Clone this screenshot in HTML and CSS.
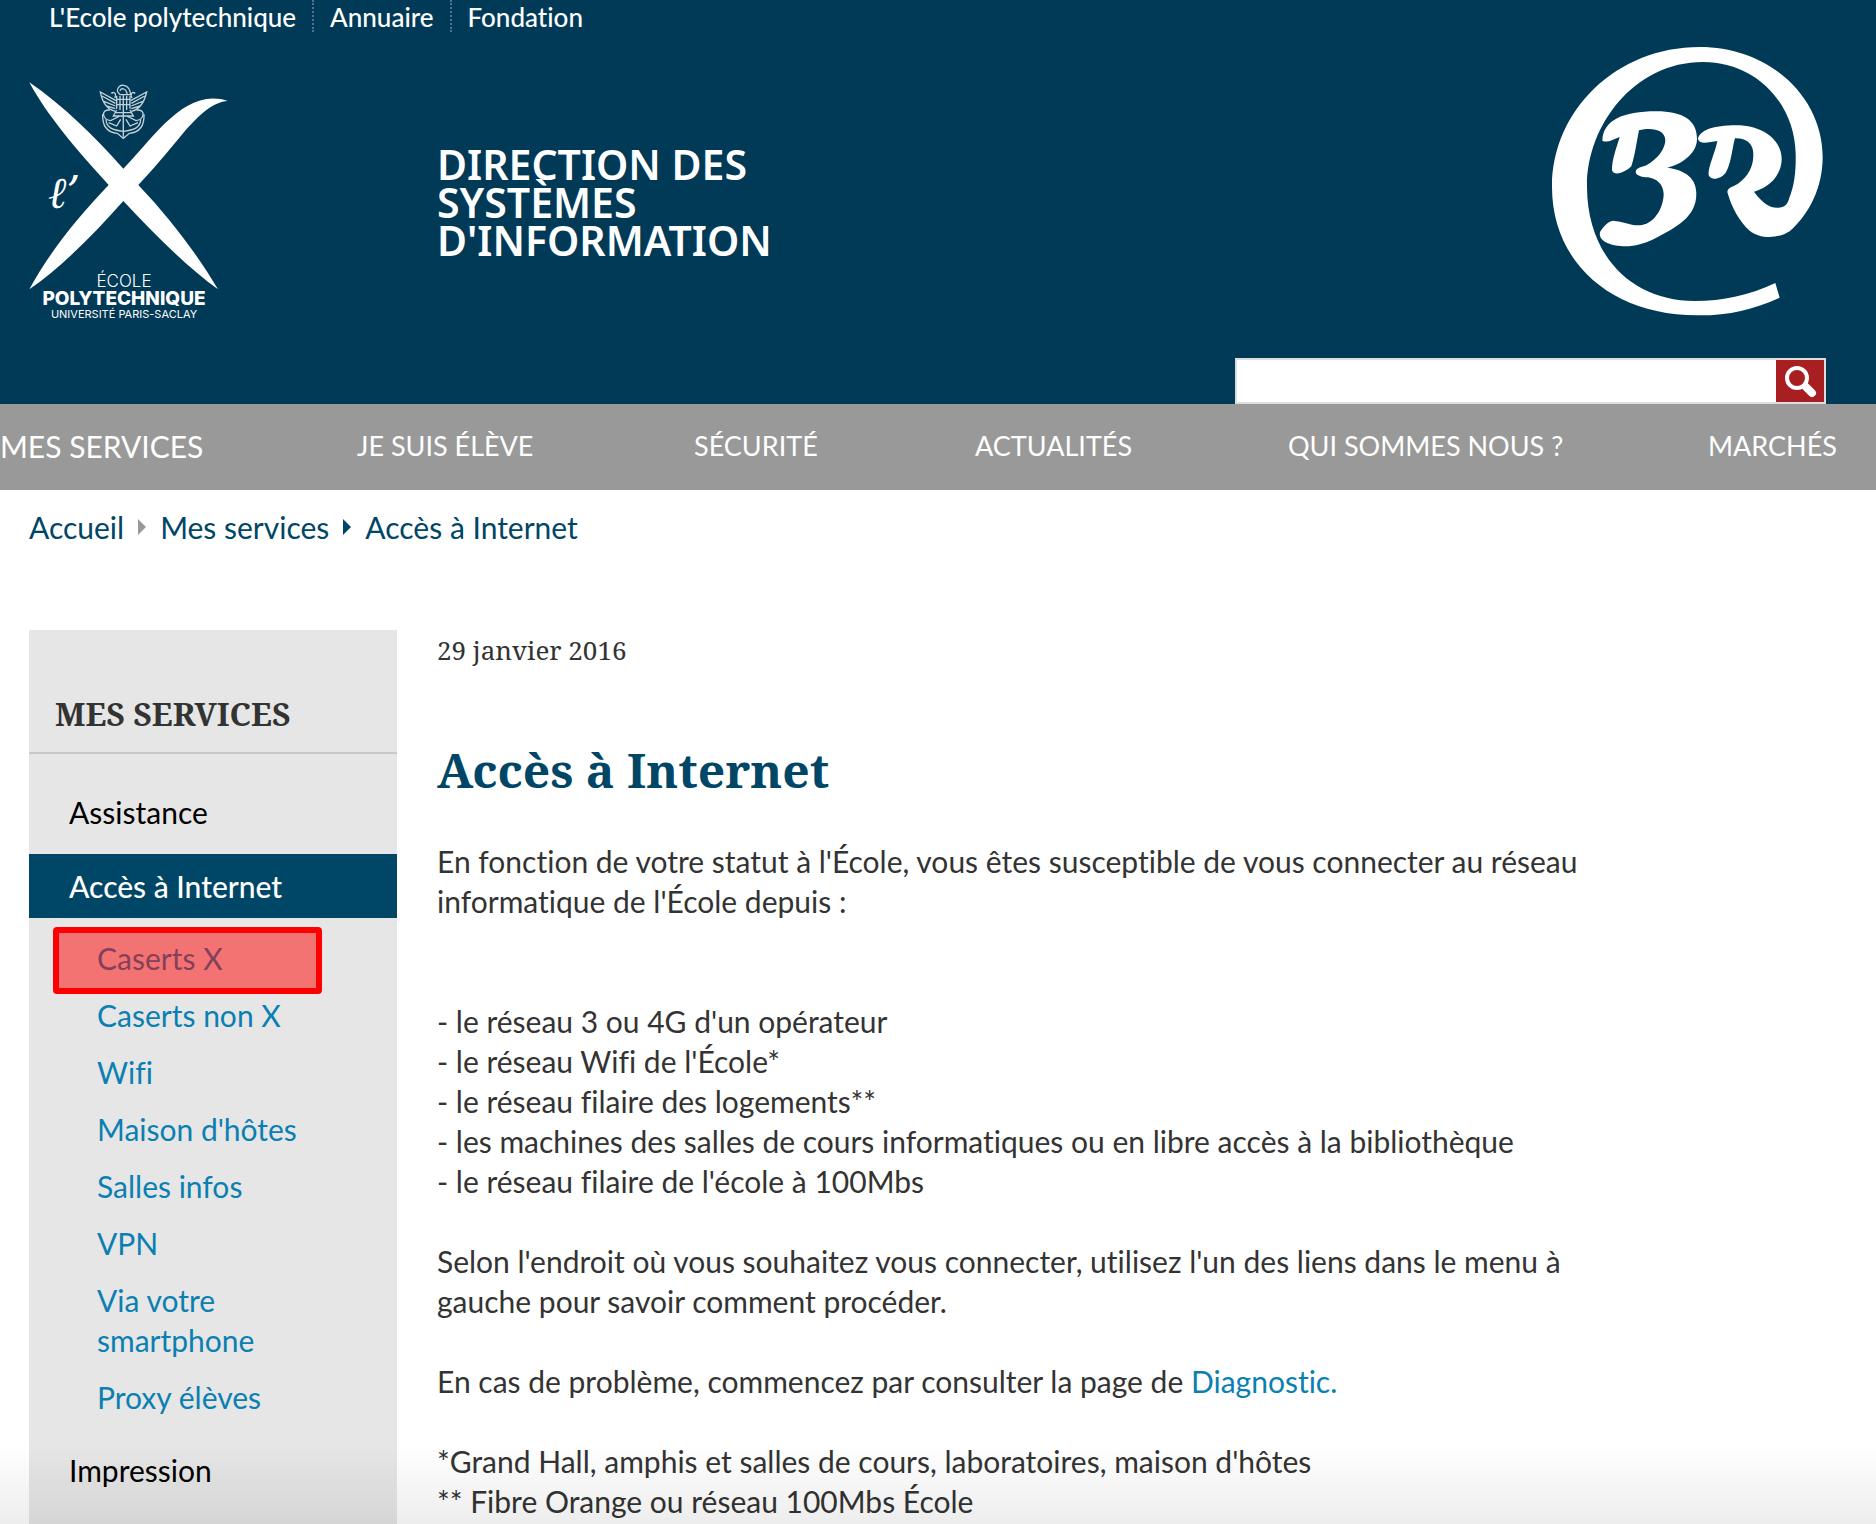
FILE: index.html
```html
<!DOCTYPE html>
<html lang="fr">
<head>
<meta charset="utf-8">
<meta name="viewport" content="width=device-width, initial-scale=1">
<title>Accès à Internet - Direction des systèmes d'information</title>
<link rel="stylesheet" href="styles.css">
</head>
<body>
<header class="header">
  <nav class="topbar" aria-label="Sites">
    <a href="#">L'Ecole polytechnique</a>
    <a href="#">Annuaire</a>
    <a href="#">Fondation</a>
  </nav>
  <div class="banner">
    <a class="logo" href="#" aria-label="École polytechnique">
      <svg width="200" height="240" viewBox="0 0 200 240" fill="#fff">
        <g transform="scale(.3333) translate(-87 -36)">
          <path d="M88 37C190 108 280 195 370 296L415 345C510 445 590 550 654 658C560 590 460 490 370 393L326 345C230 240 140 135 88 37Z"/>
          <path d="M683 93C640 96 600 130 545 195C495 255 460 297 415 345L370 393C280 495 180 595 88 658C150 545 230 445 326 345L370 296C460 205 555 50 683 93Z"/>
          <g fill="none" stroke="#c3d0d8" stroke-width="4">
            <path d="M352 64C352 38 390 38 392 76M360 62C364 52 380 54 382 76M352 64L360 74H390"/>
            <path d="M350 78V116M360 78V120M370 76V200M380 78V120M390 78V116M350 88H390M350 104H390"/>
            <path d="M348 92L301 66C306 92 318 118 346 124M346 100L306 78M346 108L312 94M346 116L320 108M334 70C346 62 350 76 344 84"/>
            <path d="M392 92L440 66C434 92 422 118 394 124M394 100L434 78M394 108L428 94M394 116L420 108M406 70C394 62 390 76 396 84"/>
            <path d="M344 128H396M350 120L340 138H400L390 120M330 120C300 118 308 150 332 152L360 138M410 120C440 118 432 150 408 152L380 138"/>
            <path d="M308 132C306 178 330 188 352 190L370 205L388 190C410 188 434 178 432 132M318 148C318 174 340 180 370 184C400 180 422 174 422 148M326 158L350 168L362 148M414 158L390 168L378 148"/>
          </g>
        </g>
        <text class="logo-script" x="19" y="126">ℓ’</text>
        <text class="logo-ecole" x="95" y="205" text-anchor="middle">ÉCOLE</text>
        <text class="logo-poly" x="95" y="223" text-anchor="middle">POLYTECHNIQUE</text>
        <text class="logo-univ" x="95" y="236" text-anchor="middle">UNIVERSITÉ PARIS-SACLAY</text>
      </svg>
    </a>
    <p class="site-name">DIRECTION DES SYSTÈMES D'INFORMATION</p>
    <a class="br-logo" href="#" aria-label="BR">
      <svg width="272" height="270" viewBox="97 50 816 810" fill="#fff">
        <path d="M767 758L780 802C700 838 630 855 540 855C280 858 97 700 97 470C97 240 290 50 540 50C750 50 909 200 909 380C909 470 870 550 810 603C775 626 720 626 690 601C660 575 635 530 623 485C625 469 640 470 655 460C690 435 705 400 700 360C695 335 675 323 646 324C638 350 635 400 618 427C605 445 575 453 567 435C564 410 586 370 593 332C570 335 540 345 535 326C540 300 580 285 650 285C730 285 786 330 786 385C786 430 755 470 703 484C730 520 750 532 772 532C795 532 803 522 808 505C825 465 829 420 828 370C825 220 710 95 550 95C340 95 200 290 202 470C203 680 340 812 525 812C610 812 690 795 767 758Z"/>
        <path d="M248 331C250 270 310 243 410 243C490 243 532 270 532 325C532 365 495 398 443 412C500 420 530 445 530 490C530 560 470 590 410 622C370 645 330 648 310 648C270 645 235 632 241 605C250 590 265 573 280 571C310 573 330 585 355 585C405 585 432 530 432 490C430 460 410 445 385 441C365 440 348 435 348 424C352 410 365 412 380 405C415 385 437 355 437 328C435 297 395 290 358 300C350 340 345 380 335 408C325 420 285 442 277 420C277 385 290 355 300 320C280 328 262 339 248 331Z"/>
      </svg>
    </a>
  </div>
  <form class="search" role="search">
    <input class="search-input" type="text" aria-label="Rechercher">
    <button class="search-button" type="button" aria-label="Lancer la recherche">
      <svg width="34" height="34" viewBox="0 0 34 34" fill="none" stroke="#fff" stroke-linecap="round">
        <circle cx="14" cy="14" r="10" stroke-width="4"/>
        <path d="M23 23L29 29" stroke-width="8"/>
      </svg>
    </button>
  </form>
</header>
<nav class="main-nav" aria-label="Navigation principale">
  <a class="current" href="#">MES SERVICES</a>
  <a href="#">JE SUIS ÉLÈVE</a>
  <a href="#">SÉCURITÉ</a>
  <a href="#">ACTUALITÉS</a>
  <a href="#">QUI SOMMES NOUS ?</a>
  <a href="#">MARCHÉS</a>
</nav>
<nav class="breadcrumb" aria-label="Fil d'Ariane">
  <a href="#">Accueil</a>
  <span class="arrow arrow-muted"></span>
  <a href="#">Mes services</a>
  <span class="arrow"></span>
  <a href="#">Accès à Internet</a>
</nav>
<div class="columns">
  <aside class="sidebar">
    <h2>MES SERVICES</h2>
    <ul class="menu">
      <li><a href="#">Assistance</a></li>
      <li>
        <a class="active" href="#">Accès à Internet</a>
        <ul class="submenu">
          <li class="marked"><a href="#">Caserts X</a></li>
          <li><a href="#">Caserts non X</a></li>
          <li><a href="#">Wifi</a></li>
          <li><a href="#">Maison d'hôtes</a></li>
          <li><a href="#">Salles infos</a></li>
          <li><a href="#">VPN</a></li>
          <li><a href="#">Via votre smartphone</a></li>
          <li><a href="#">Proxy élèves</a></li>
        </ul>
      </li>
      <li><a href="#">Impression</a></li>
    </ul>
  </aside>
  <main class="content">
    <time class="date" datetime="2016-01-29">29 janvier 2016</time>
    <h1>Accès à Internet</h1>
    <p class="intro">En fonction de votre statut à l'École, vous êtes susceptible de vous connecter au réseau<br>informatique de l'École depuis :</p>
    <p>- le réseau 3 ou 4G d'un opérateur<br>
    - le réseau Wifi de l'École*<br>
    - le réseau filaire des logements**<br>
    - les machines des salles de cours informatiques ou en libre accès à la bibliothèque<br>
    - le réseau filaire de l'école à 100Mbs</p>
    <p>Selon l'endroit où vous souhaitez vous connecter, utilisez l'un des liens dans le menu à<br>gauche pour savoir comment procéder.</p>
    <p>En cas de problème, commencez par consulter la page de <a href="#">Diagnostic.</a></p>
    <p>*Grand Hall, amphis et salles de cours, laboratoires, maison d'hôtes<br>
    ** Fibre Orange ou réseau 100Mbs École</p>
  </main>
</div>
</body>
</html>
```
FILE: styles.css
```css
* { box-sizing: border-box; }

body {
  margin: 0;
  min-height: 100vh;
  display: flex;
  flex-direction: column;
  background: #fff;
  color: #333;
  font: 30px/40px Lato, "Open Sans", sans-serif;
  font-variant-ligatures: none;
}

/* shade along the bottom edge of the window */
body::after {
  content: "";
  position: fixed;
  inset: auto 0 0;
  height: 80px;
  background: linear-gradient(rgba(0, 0, 0, 0), rgba(0, 0, 0, .07));
  pointer-events: none;
}

a { color: inherit; text-decoration: none; }
h1, h2, p, ul { margin: 0; padding: 0; }
ul { list-style: none; }
svg { display: block; }

.header { background: #003a57; color: #fff; padding: 0 50px 0 29px; }

.topbar { display: flex; padding-left: 4px; font-size: 26px; line-height: 30px; font-weight: 500; }
.topbar a { padding: 2px 16px 0; }
.topbar a + a { border-left: 2px dotted #4d7589; }

.banner { display: flex; align-items: flex-start; }
.logo { flex: 0 0 408px; padding-top: 50px; }
.logo-script { font: italic 44px "DejaVu Serif", serif; }
.logo-ecole { font: 300 17px Inter, sans-serif; }
.logo-poly { font: 800 19px Inter, sans-serif; }
.logo-univ { font: 11px Inter, sans-serif; }
.site-name { flex: 0 1 380px; padding-top: 113px; font: 600 41px/38px "Noto Sans", "Open Sans", sans-serif; }
.br-logo { margin-left: auto; padding: 15px 2px 0 0; }

.search { display: flex; width: 591px; height: 46px; margin: 36px 0 0 auto; border: 2px solid #ddd; background: #fff; }
.search-input { flex: 1; min-width: 0; border: 0; padding: 0 12px; background: #fff; font: inherit; color: #333; }
.search-button { display: grid; place-items: center; width: 48px; border: 0; padding: 0; background: #a81f22; }

.main-nav {
  display: grid;
  grid-template-columns: 357fr 337fr 281fr 313fr 420fr 168fr;
  padding: 22px 0 24px;
  background: #999;
  color: #fff;
  font-size: 27px;
  white-space: nowrap;
}
.main-nav .current { font-size: 30px; }

.breadcrumb { display: flex; align-items: center; gap: 14px; padding: 17px 29px 0; color: #004666; }
.arrow { border: solid transparent; border-width: 8px 0 8px 8px; border-left-color: #004666; }
.arrow-muted { border-left-color: #999; }

.columns { flex: 1; display: flex; gap: 40px; padding: 83px 29px 0; }

.sidebar { flex: 0 0 368px; background: #e6e6e6; }
.sidebar h2 {
  padding: 64px 26px 18px;
  border-bottom: 2px solid #c8c8c8;
  color: #333;
  font: bold 32px/40px "Noto Serif", "DejaVu Serif", serif;
}
.menu { padding-top: 26px; color: #000; }
.menu > li > a { display: block; padding: 12px 40px; }
.menu > li > .active { margin-top: 10px; background: #004666; color: #fff; font-weight: 500; }
.submenu { padding: 11px 68px 13px; color: #0a7fb2; }
.submenu a { display: block; padding: 9px 0 8px; }
.marked { position: relative; }
.marked::after {
  content: "";
  position: absolute;
  inset: -2px 7px -8px -44px;
  border: 6px solid #f00;
  border-radius: 4px;
  background: rgba(255, 0, 0, .5);
}

.content { flex: 1; min-width: 0; }
.date { display: block; font: 26px/40px "Noto Serif", serif; }
.content h1 {
  margin: 70px 0 41px;
  color: #004666;
  font: bold 48px/60px "Noto Serif", "DejaVu Serif", serif;
}
.content p { margin-bottom: 40px; }
.content .intro { margin-bottom: 80px; }
.content p:last-child { margin-bottom: 0; }
.content p a { color: #0a7fb2; }
```
